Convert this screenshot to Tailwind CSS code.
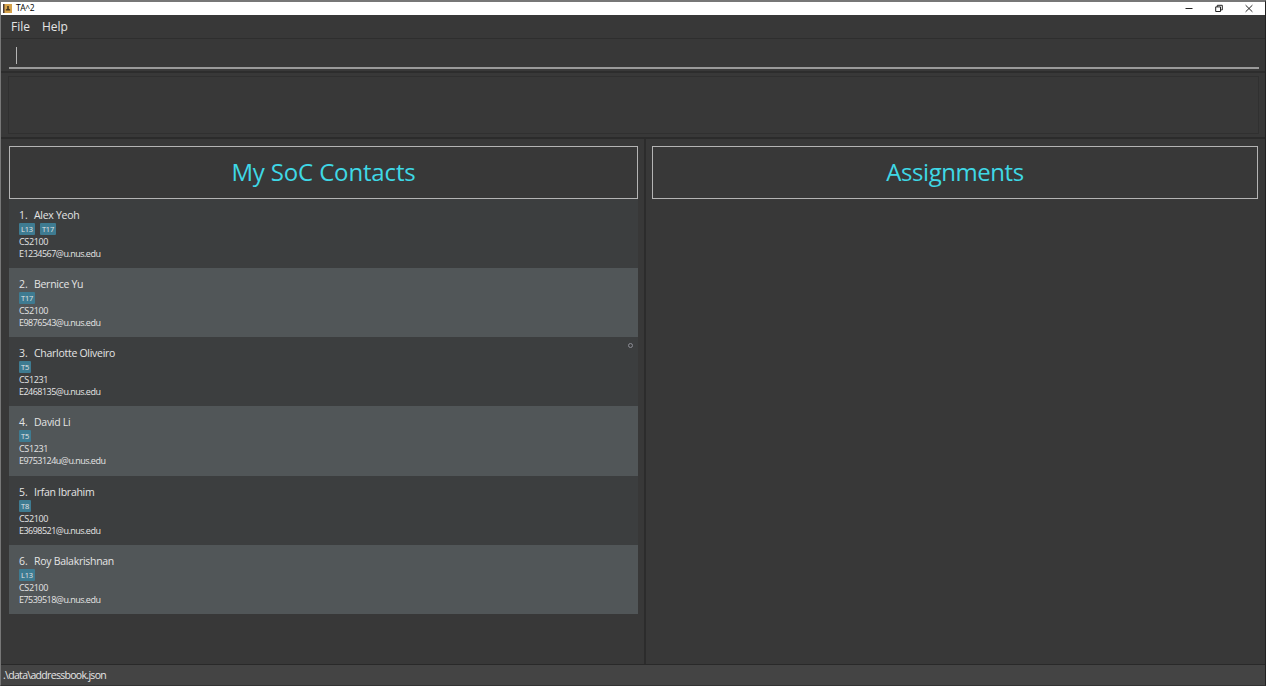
<!DOCTYPE html>
<html lang="en">
<head>
<meta charset="utf-8">
<title>TA^2</title>
<script src="https://cdn.jsdelivr.net/npm/@tailwindcss/browser@4"></script>
</head>
<body class="w-[1266px] h-[686px] overflow-hidden bg-[#383838] font-['Open_Sans','Noto_Sans',sans-serif] text-[#e4e4e4]">
<div class="flex flex-col w-[1266px] h-[686px] border-t-2 border-t-[#777] border-l border-l-[#777] border-r border-r-[#222] border-b border-b-[#333]">
  <header class="flex items-center h-[13px] shrink-0 bg-white text-black pl-[2px]">
    <svg class="w-[9px] h-[9px] mr-[4px]" viewBox="0 0 9 9"><rect width="9" height="9" fill="#d7a34b"/><rect width="1.5" height="9" fill="#4b3c38"/><path d="M4.2 2h1.6v2.8l1.4.8v1H2.8v-1l1.4-.8z" fill="#49381f"/></svg>
    <span class="relative -top-px text-[8.5px] leading-[12px] tracking-[-0.4px]">TA^2</span>
    <div class="ml-auto flex items-center gap-[22px] pr-[12px]">
      <svg class="w-[8px] h-[9px]" viewBox="0 0 8 9" fill="none" stroke="#222"><path d="M.5 4.5h7"/></svg>
      <svg class="w-[8px] h-[9px]" viewBox="0 0 8 9" fill="none" stroke="#222"><path d="M.7 2.9h4.8v4.6H.7zM2.3 2.9V1.3h5v4.6H5.5"/></svg>
      <svg class="w-[8px] h-[9px]" viewBox="0 0 8 9" fill="none" stroke="#222"><path d="M.6 1.2l6.8 6.6M7.4 1.2L.6 7.8"/></svg>
    </div>
  </header>
  <nav class="flex h-[24px] shrink-0 border-b border-[#2e2e2e] pl-[10px] gap-[12px] text-[12px] leading-[23px]">
    <span class="w-[19px] whitespace-nowrap">File</span><span>Help</span>
  </nav>
  <section class="flex flex-col h-[34px] shrink-0 border-b-2 border-[#2d2d2d] pl-[8px] pr-[6px]">
    <div class="h-[30px] border-b-2 border-[#9a9a9a] pl-[7px] pt-[8px]"><div class="w-px h-[17px] bg-[#b5b5b5]"></div></div>
  </section>
  <section class="h-[66px] shrink-0 border-b-2 border-[#2b2b2b] pt-[3px] pb-[3px] pl-[7px] pr-[6px]">
    <div class="h-full border border-[#303030]"></div>
  </section>
  <main class="flex grow min-h-0">
    <section class="w-[645px] shrink-0 border-r-2 border-[#2c2c2c] pl-[8px] pr-[6px] pt-[7px]">
      <h1 class="h-[53px] border border-[#b4b4b4] flex justify-center text-[24px] leading-[50px] text-[#3fd8e6] font-normal tracking-[-0.15px]"><span>My SoC Contacts</span></h1>
      <ol id="contacts"></ol>
    </section>
    <section class="grow pl-[6px] pr-[7px] pt-[7px]">
      <h1 class="h-[53px] border border-[#b4b4b4] flex justify-center text-[24px] leading-[50px] text-[#3fd8e6] font-normal tracking-[-0.45px]"><span>Assignments</span></h1>
    </section>
  </main>
  <footer class="h-[21px] shrink-0 border-t border-[#292929] bg-[#444] pl-[2px] text-[10.5px] leading-[20px] tracking-[-0.69px]">.\data\addressbook.json</footer>
</div>
<script>
const people = [
  ['Alex Yeoh', ['L13','T17'], 'CS2100', 'E1234567@u.nus.edu'],
  ['Bernice Yu', ['T17'], 'CS2100', 'E9876543@u.nus.edu'],
  ['Charlotte Oliveiro', ['T5'], 'CS1231', 'E2468135@u.nus.edu'],
  ['David Li', ['T5'], 'CS1231', 'E9753124u@u.nus.edu'],
  ['Irfan Ibrahim', ['T8'], 'CS2100', 'E3698521@u.nus.edu'],
  ['Roy Balakrishnan', ['L13'], 'CS2100', 'E7539518@u.nus.edu']
];
document.getElementById('contacts').innerHTML = people.map((p, i) => `
  <li class="relative h-[69.15px] pl-[10px] pt-[8px] ${i % 2 ? 'bg-[#515658]' : 'bg-[#3c3e3f]'}">
    <div class="flex h-[16px] text-[10.5px] leading-[17px] tracking-[-0.28px]"><span class="w-[15px] tracking-normal">${i + 1}.</span><span>${p[0]}</span></div>
    <div class="flex h-[12px] gap-[5px]">${p[1].map(t => `<span class="h-[12px] px-[2px] rounded-[1px] bg-[#3e7b91] text-[7.5px] leading-[12px] tracking-[-0.2px]">${t}</span>`).join('')}</div>
    <div class="h-[13px] text-[9px] leading-[13px] tracking-[-0.35px]">${p[2]}</div>
    <div class="h-[12px] text-[9px] leading-[12px] tracking-[-0.52px]">${p[3]}</div>
    ${i === 2 ? '<span class="absolute right-[5px] top-[5.5px] size-[5px] rounded-full border border-[#8b8b93]"></span>' : ''}
  </li>`).join('');
</script>
</body>
</html>
